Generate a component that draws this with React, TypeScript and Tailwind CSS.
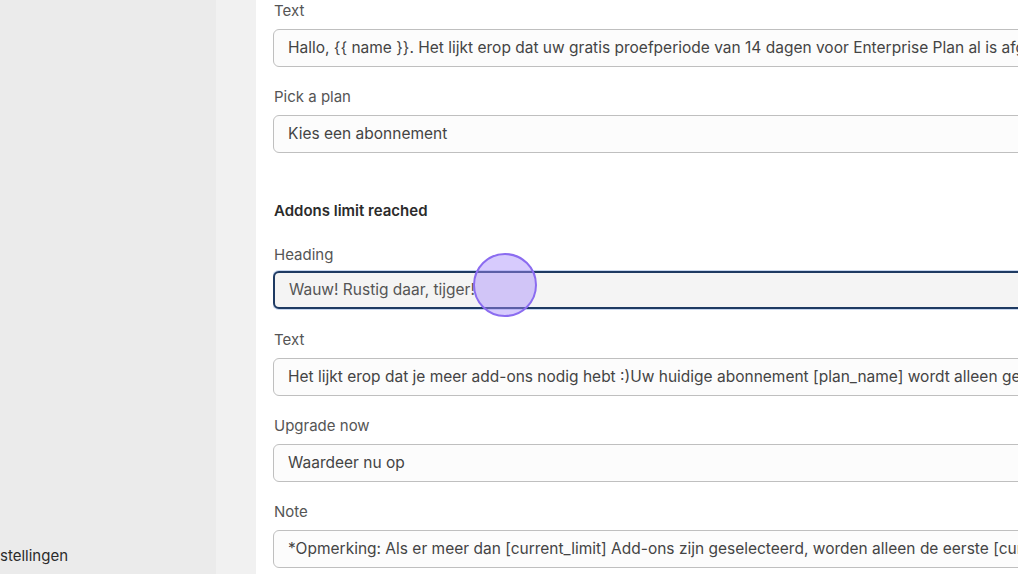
const font = { fontFamily: "Inter, 'Noto Sans', sans-serif" };

function Field({
  label,
  value,
  focused = false,
}: {
  label: string;
  value: string;
  focused?: boolean;
}) {
  return (
    <div className="flex flex-col">
      <label className="pl-px text-[15px] leading-5 text-[#555]">{label}</label>
      <div
        className={`flex h-[38px] w-[800px] shrink-0 items-center rounded-md pl-[14px] text-[15.5px] whitespace-nowrap ${
          focused
            ? "mt-[6px] border-2 border-[#1e3a62] bg-[#f4f4f4] text-[#555] shadow-[0_0_0_1px_#c7d6ee]"
            : "mt-2 border border-[#bfbfbf] bg-[#fcfcfc] text-[#444]"
        }`}
      >
        {value}
      </div>
    </div>
  );
}

export default function App() {
  return (
    <div className="flex h-[574px] w-[1024px] overflow-hidden bg-white" style={font}>
      <aside className="flex w-[216px] shrink-0 flex-col justify-end bg-[#ebebeb] pb-[8px]">
        <span className="text-[15px] leading-5 text-[#2b2b2b]">stellingen</span>
      </aside>
      <div className="w-[40px] shrink-0 bg-[#f1f1f1]" />

      <main className="relative min-w-0 flex-1 pt-px pr-[6px] pl-[17px]">
        <div className="flex flex-col overflow-hidden">
          <Field
            label="Text"
            value="Hallo, {{ name }}. Het lijkt erop dat uw gratis proefperiode van 14 dagen voor Enterprise Plan al is afgelopen."
          />
          <div className="mt-5">
            <Field label="Pick a plan" value="Kies een abonnement" />
          </div>

          <h3 className="mt-12 pl-px text-[15px] leading-5 font-semibold text-[#2b2b2b]">
            Addons limit reached
          </h3>

          <div className="mt-6">
            <Field label="Heading" value="Wauw! Rustig daar, tijger!" focused />
          </div>
          <div className="mt-[21px]">
            <Field
              label="Text"
              value="Het lijkt erop dat je meer add-ons nodig hebt :)Uw huidige abonnement [plan_name] wordt alleen geleverd met [current_limit] add-ons."
            />
          </div>
          <div className="mt-5">
            <Field label="Upgrade now" value="Waardeer nu op" />
          </div>
          <div className="mt-5">
            <Field
              label="Note"
              value="*Opmerking: Als er meer dan [current_limit] Add-ons zijn geselecteerd, worden alleen de eerste [current_limit] gebruikt."
            />
          </div>
        </div>

        {/* click indicator */}
        <div className="absolute top-[253px] left-[217px] h-[64px] w-[64px] rounded-full border-2 border-[#8b6cf0] bg-[#a78bfa]/45" />
      </main>
    </div>
  );
}
